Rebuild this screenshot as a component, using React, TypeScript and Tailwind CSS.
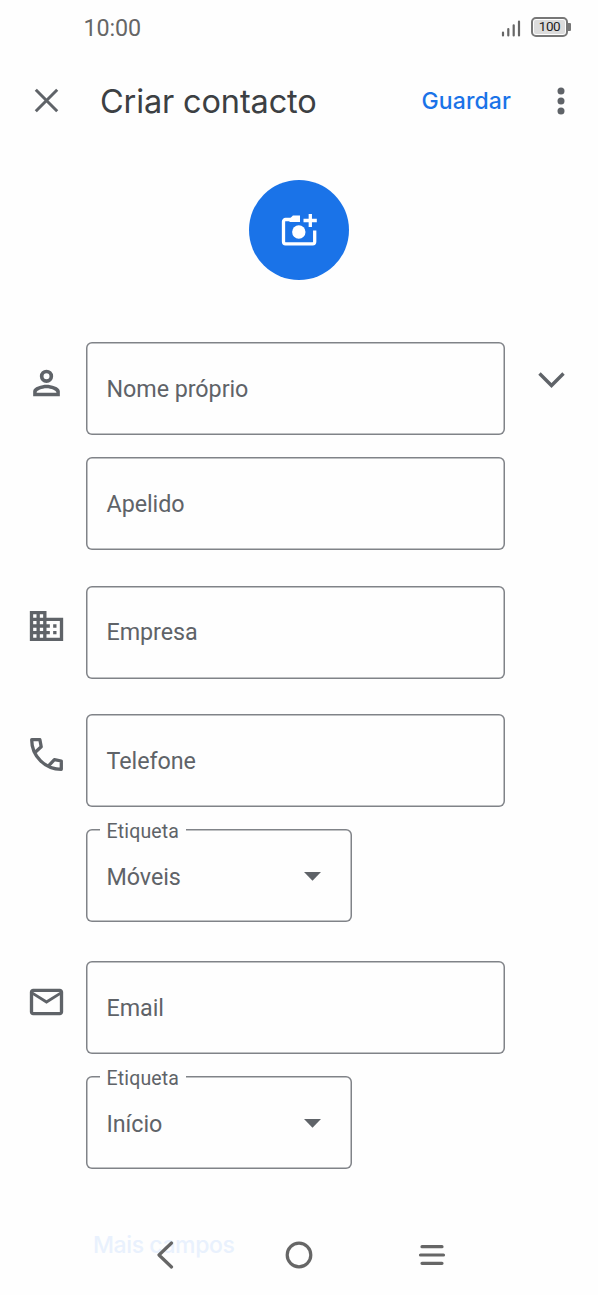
import React from 'react';

type FieldProps = {
  label: string;
};

type SelectFieldProps = {
  label: string;
  value: string;
};

type RowProps = {
  icon: React.ReactNode;
  action?: React.ReactNode;
  children: React.ReactNode;
};

const PersonIcon = () => (
  <svg width="40" height="40" viewBox="-0.3 0 24 24" fill="currentColor">
    <path d="M12 4a4 4 0 1 0 0 8 4 4 0 0 0 0-8zm0 2.2a1.8 1.8 0 1 1 0 3.6 1.8 1.8 0 0 1 0-3.6zM12 13c-2.67 0-8 1.34-8 4v3h16v-3c0-2.66-5.33-4-8-4zm5.9 4.9H6.1V17.4c.3-.9 3-2.3 5.9-2.3s5.6 1.4 5.9 2.3v.5z" />
  </svg>
);

const CompanyIcon = () => (
  <svg width="40" height="40" viewBox="-0.3 0 24 24" fill="currentColor">
    <path d="M12 7V3H2v18h20V7H12zM6 19H4v-2h2v2zm0-4H4v-2h2v2zm0-4H4V9h2v2zm0-4H4V5h2v2zm4 12H8v-2h2v2zm0-4H8v-2h2v2zm0-4H8V9h2v2zm0-4H8V5h2v2zm10 12h-8v-2h2v-2h-2v-2h2v-2h-2V9h8v10zm-2-8h-2v2h2v-2zm0 4h-2v2h2v-2z" />
  </svg>
);

const PhoneIcon = () => (
  <svg width="33" height="33" viewBox="0 0 33 33" fill="none" stroke="currentColor" strokeWidth="3.3" strokeLinejoin="round">
    <path d="M5.5 14L11.2 8.7L9.9 1.7H1.7C1.7 18 15 31.3 31.3 31.3V23L24.4 21.6L19 27.4" />
  </svg>
);

const MailIcon = () => (
  <svg width="40" height="40" viewBox="-0.3 0 24 24" fill="currentColor">
    <path d="M20 4H4c-1.1 0-2 .9-2 2v12c0 1.1.9 2 2 2h16c1.1 0 2-.9 2-2V6c0-1.1-.9-2-2-2zm0 14H4V8l8 5 8-5v10zm-8-7L4 6h16l-8 5z" />
  </svg>
);

const AddPhotoIcon = () => (
  <svg width="36" height="32" viewBox="0 0 36 32" fill="none">
    <path d="M18.5 5.5H4.5a2 2 0 0 0-2 2v20.3a2 2 0 0 0 2 2h27.2a2 2 0 0 0 2-2V16.5" stroke="white" strokeWidth="3.3" />
    <path d="M8.5 5l3.4-3.6h7.1V8H8.5z" fill="white" />
    <circle cx="17.8" cy="18" r="6.7" fill="white" />
    <path d="M29.3 0v13M22.5 6.5h13.3" stroke="white" strokeWidth="3.3" />
  </svg>
);

const Field = ({ label }: FieldProps) => (
  <div className="flex h-[93px] w-[419px] items-center rounded-[6px] px-[20.5px] shadow-[inset_0_0_0_1.5px_#808388]">
    <span className="text-[23.3px] leading-7 tracking-[-0.05px]">{label}</span>
  </div>
);

const SelectField = ({ label, value }: SelectFieldProps) => (
  <div className="relative flex h-[93px] w-[266px] items-center justify-between rounded-[6px] pl-[20.5px] pr-[31px] shadow-[inset_0_0_0_1.5px_#808388]">
    <span className="absolute -top-[11px] left-[13.5px] bg-[#fefefe] px-[7px] text-[19.5px] leading-7 tracking-[0.15px]">{label}</span>
    <span className="pt-[2px] text-[23.3px] leading-7 tracking-[-0.07px]">{value}</span>
    <svg className="mt-[2px]" width="17" height="9" viewBox="0 0 17 9" fill="currentColor">
      <path d="M0 0h17L8.5 8.7z" />
    </svg>
  </div>
);

const Row = ({ icon, action, children }: RowProps) => (
  <div className="flex">
    <div className="flex w-[86px] shrink-0 justify-center pl-[6.5px] pt-[20.5px]">
      <div className="flex size-10 items-center justify-center">{icon}</div>
    </div>
    <div className="flex flex-col gap-[22px]">{children}</div>
    {action}
  </div>
);

const App = () => {
  return (
    <div className="relative h-[1295px] w-[598px] overflow-hidden bg-[#fefefe] font-['Roboto',sans-serif] text-[#5f6368]">
      {/* Status bar */}
      <div className="flex h-14 items-center justify-between pl-[83.5px] pr-[27px] text-[#666]">
        <span className="text-[23.3px] leading-7 tracking-[-0.1px]">10:00</span>
        <div className="flex items-center gap-[10px]">
          <svg width="20" height="17" viewBox="0 0 20 17" stroke="currentColor" strokeWidth="2.2" strokeLinecap="round">
            <path d="M2 12.5v3M7.3 9v6.5M12.7 5.3v10.2M18 1.5v14" />
          </svg>
          <div className="flex items-center pb-[2px]">
            <div className="flex h-[20px] w-[37px] items-center justify-center rounded-[5px] border-2 border-[#777] p-px">
              <span className="flex h-full w-full items-center justify-center rounded-[2px] bg-[#dcdcdc] text-[13.5px] leading-none tracking-[-0.5px] text-[#222]">100</span>
            </div>
            <div className="h-2 w-[3px] rounded-r-[1px] bg-[#777]" />
          </div>
        </div>
      </div>

      {/* App bar */}
      <div className="flex h-[90px] items-center pl-[34px] pr-[33px]">
        <svg className="mb-px" width="25" height="25" viewBox="0 0 25 25" stroke="currentColor" strokeWidth="3">
          <path d="M1.8 1.8l21.4 21.4M23.2 1.8L1.8 23.2" />
        </svg>
        <h1 className="ml-[41px] flex-1 whitespace-nowrap pt-px font-['Inter',sans-serif] text-[32.5px] leading-10 tracking-[-0.15px] text-[#3c4043]">
          Criar contacto
        </h1>
        <button className="font-['Inter',sans-serif] text-[23px] font-medium leading-8 tracking-[0.1px] text-[#1a73e8]">Guardar</button>
        <svg className="ml-[46px]" width="8" height="28" viewBox="0 0 8 28" fill="currentColor">
          <circle cx="4" cy="4" r="3.5" />
          <circle cx="4" cy="14" r="3.5" />
          <circle cx="4" cy="24" r="3.5" />
        </svg>
      </div>

      {/* Photo */}
      <div className="mx-auto mt-[34px] flex size-[100px] items-center justify-center rounded-full bg-[#1a73e8]">
        <AddPhotoIcon />
      </div>

      {/* Form */}
      <div className="mt-[62px] flex flex-col">
        <Row
          icon={<PersonIcon />}
          action={
            <svg className="ml-[33px] mt-[29px]" width="27" height="18" viewBox="0 0 27 18" fill="none" stroke="currentColor" strokeWidth="3.4">
              <path d="M1.5 2.5l12 12 12-12" />
            </svg>
          }
        >
          <Field label="Nome próprio" />
          <Field label="Apelido" />
        </Row>
        <div className="mt-[35.5px]">
          <Row icon={<CompanyIcon />}>
            <Field label="Empresa" />
          </Row>
        </div>
        <div className="mt-[35.5px]">
          <Row icon={<PhoneIcon />}>
            <Field label="Telefone" />
            <SelectField label="Etiqueta" value="Móveis" />
          </Row>
        </div>
        <div className="mt-[39px]">
          <Row icon={<MailIcon />}>
            <Field label="Email" />
            <SelectField label="Etiqueta" value="Início" />
          </Row>
        </div>
      </div>

      <button className="ml-[93px] mt-[60px] block font-['Inter',sans-serif] text-[23px] font-medium leading-8 tracking-[-0.4px] text-[#e9f1fd]">Mais campos</button>

      {/* System navigation */}
      <div className="absolute inset-x-0 bottom-0 flex h-20 items-center pl-[156px] text-[#666]">
        <svg width="18" height="28" viewBox="0 0 18 28" fill="none" stroke="currentColor" strokeWidth="3.2" strokeLinecap="round" strokeLinejoin="round">
          <path d="M15.5 2L3 14l12.5 12" />
        </svg>
        <svg className="ml-[111px]" width="28" height="28" viewBox="0 0 28 28" fill="none" stroke="currentColor" strokeWidth="3.2">
          <circle cx="14" cy="14" r="11.8" />
        </svg>
        <svg className="ml-[105px]" width="28" height="24" viewBox="0 0 28 24" stroke="currentColor" strokeWidth="3.2" strokeLinecap="round">
          <path d="M4 3.7h20M2.5 12h23M4 20.3h20" />
        </svg>
      </div>
    </div>
  );
};

export default App;
